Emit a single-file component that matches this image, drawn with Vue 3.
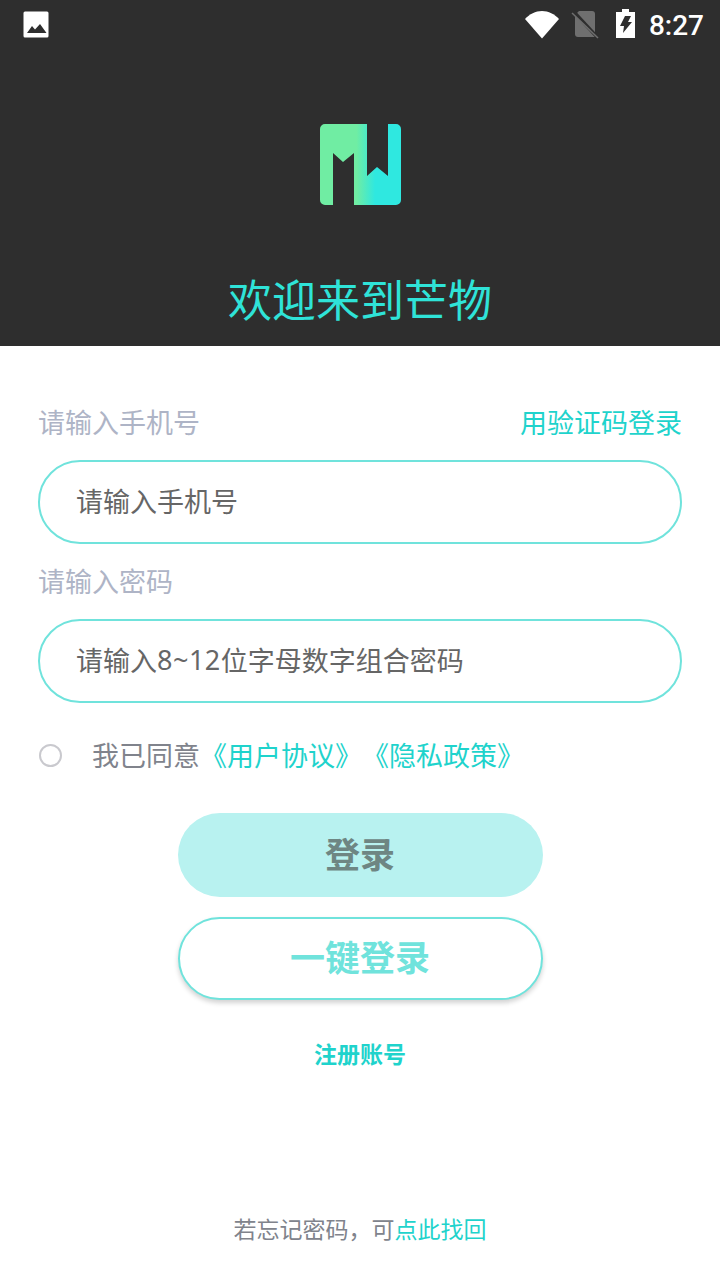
<script setup>
const brandGradient = "logoGrad";
</script>

<template>
  <div class="page">
    <header class="hero">
      <div class="status-bar">
        <svg class="pic-icon" width="28" height="28" viewBox="0 0 28 28">
          <path fill="#fff" fill-rule="evenodd" d="M3 0.500h22a1.500 1.500 0 0 1 1.500 1.500v23a1.500 1.500 0 0 1-1.500 1.500H3A1.500 1.500 0 0 1 1.500 25V2A1.500 1.500 0 0 1 3 0.500zM5 22h19.500L18 13l-5 5.500-3-3.500z" />
        </svg>
        <div class="status-right">
          <svg class="wifi" width="36" height="29" viewBox="0 0 36 29">
            <path fill="#fff" d="M18 28.500 1 9C5.500 4 11.500 1 18 1S30.500 4 35 9z" />
          </svg>
          <svg class="sim" width="28" height="30" viewBox="0 0 28 30">
            <path fill="#6f6f6f" d="M4 6 8 2h13a3 3 0 0 1 3 3v23H7a3 3 0 0 1-3-3z" />
            <path stroke="#2e2e2e" stroke-width="3.500" d="M2 2 28 30" />
            <path stroke="#6f6f6f" stroke-width="1.500" d="M1 4 27 29" />
          </svg>
          <svg class="battery" width="19" height="29" viewBox="0 0 19 29">
            <path fill="#fff" fill-rule="evenodd" d="M6 0h7v3h6v26H0V3h6zM9 7 4 17h4l-1 7 9-11h-4l3-6z" />
          </svg>
          <span class="clock">8:27</span>
        </div>
      </div>

      <svg class="logo" width="81" height="81" viewBox="0 0 81 81">
        <defs>
          <linearGradient :id="brandGradient" x1="0" x2="1" y1="0" y2="0">
            <stop offset="0.45" stop-color="#70eda3" />
            <stop offset="0.68" stop-color="#2fe8e0" />
          </linearGradient>
        </defs>
        <path :fill="`url(#${brandGradient})`" d="M5 0H47V52L57 43 68 52V0H76A5 5 0 0 1 81 5V76A5 5 0 0 1 76 81H34V29L23 38 13 29V81H5A5 5 0 0 1 0 76V5A5 5 0 0 1 5 0Z" />
      </svg>

      <h1 class="welcome">欢迎来到芒物</h1>
    </header>

    <main class="form">
      <div class="label-row">
        <span class="label">请输入手机号</span>
        <span class="code-login">用验证码登录</span>
      </div>
      <div class="field">请输入手机号</div>

      <div class="label-row second">
        <span class="label">请输入密码</span>
      </div>
      <div class="field">请输入<span class="digits">8~12</span>位字母数字组合密码</div>

      <div class="agree">
        <span class="radio"></span>
        <span class="agree-text">我已同意<span class="link">《用户协议》《隐私政策》</span></span>
      </div>

      <div class="actions">
        <button class="btn btn-login">登录</button>
        <button class="btn btn-quick">一键登录</button>
        <div class="register">注册账号</div>
      </div>

      <div class="forgot">若忘记密码，可<span class="link">点此找回</span></div>
    </main>
  </div>
</template>

<style scoped>
.page {
  width: 720px;
  height: 1280px;
  background: #fff;
  font-family: "Noto Sans CJK SC", "Noto Sans", sans-serif;
  text-spacing-trim: space-all;
  overflow: hidden;
}

.hero {
  height: 346px;
  background: #2e2e2e;
  display: flex;
  flex-direction: column;
  align-items: center;
}

.status-bar {
  width: 100%;
  height: 50px;
  box-sizing: border-box;
  padding: 0 16px 0 22px;
  display: flex;
  justify-content: space-between;
  align-items: center;
}

.status-right {
  display: flex;
  align-items: center;
}

.wifi {
  margin: 0 11px 2px 0;
}

.sim {
  margin: 0 17px 2px 0;
}

.battery {
  margin: 0 14px 3px 0;
}

.clock {
  font-family: Roboto, sans-serif;
  font-size: 28px;
  font-weight: 500;
  color: #fff;
}

.logo {
  margin-top: 74px;
}

.welcome {
  margin: 63px 0 0;
  font-size: 44px;
  line-height: 60px;
  font-weight: 400;
  color: #2fe3d8;
}

.form {
  padding: 0 38px;
  position: relative;
  height: 934px;
}

.label-row {
  display: flex;
  justify-content: space-between;
  align-items: center;
  height: 36px;
  padding-top: 57px;
  margin-bottom: 21px;
}

.label-row.second {
  padding-top: 0;
  margin-top: 18px;
  margin-bottom: 21px;
}

.label {
  font-size: 27px;
  color: #aeb4c6;
}

.code-login {
  font-size: 27px;
  color: #1fd3cc;
}

.field {
  height: 84px;
  box-sizing: border-box;
  border: 2px solid #70e3dc;
  border-radius: 42px;
  padding: 0 0 4px 36px;
  display: flex;
  align-items: center;
  font-size: 27px;
  color: #666;
}

.digits {
  font-family: "Noto Sans", sans-serif;
  letter-spacing: 0.5px;
}

.agree {
  display: flex;
  align-items: center;
  margin-top: 32px;
  height: 40px;
  padding-left: 1px;
}

.radio {
  width: 23px;
  height: 23px;
  box-sizing: border-box;
  border: 2px solid #c9c9ce;
  border-radius: 50%;
}

.agree-text {
  margin-left: 30px;
  font-size: 27px;
  color: #80838c;
  position: relative;
  top: -1px;
}

.link {
  color: #1fd3cc;
}

.actions {
  display: flex;
  flex-direction: column;
  align-items: center;
  margin-top: 38px;
}

.btn {
  width: 365px;
  border-radius: 42px;
  font-family: inherit;
  font-weight: 700;
  font-size: 35px;
}

.btn-login {
  height: 84px;
  padding: 0 0 6px;
  background: #b8f2f0;
  border: none;
  color: #6e8683;
}

.btn-quick {
  height: 83px;
  margin-top: 20px;
  padding: 0 0 6px;
  background: #fff;
  border: 2px solid #70e3dc;
  color: #70e3dc;
  box-shadow: 0 3px 5px rgba(0, 0, 0, 0.18);
}

.register {
  margin-top: 36px;
  font-size: 23px;
  font-weight: 700;
  color: #1fd3cc;
}

.forgot {
  position: absolute;
  left: 0;
  right: 0;
  top: 865px;
  text-align: center;
  font-size: 23px;
  color: #80838c;
}
</style>
